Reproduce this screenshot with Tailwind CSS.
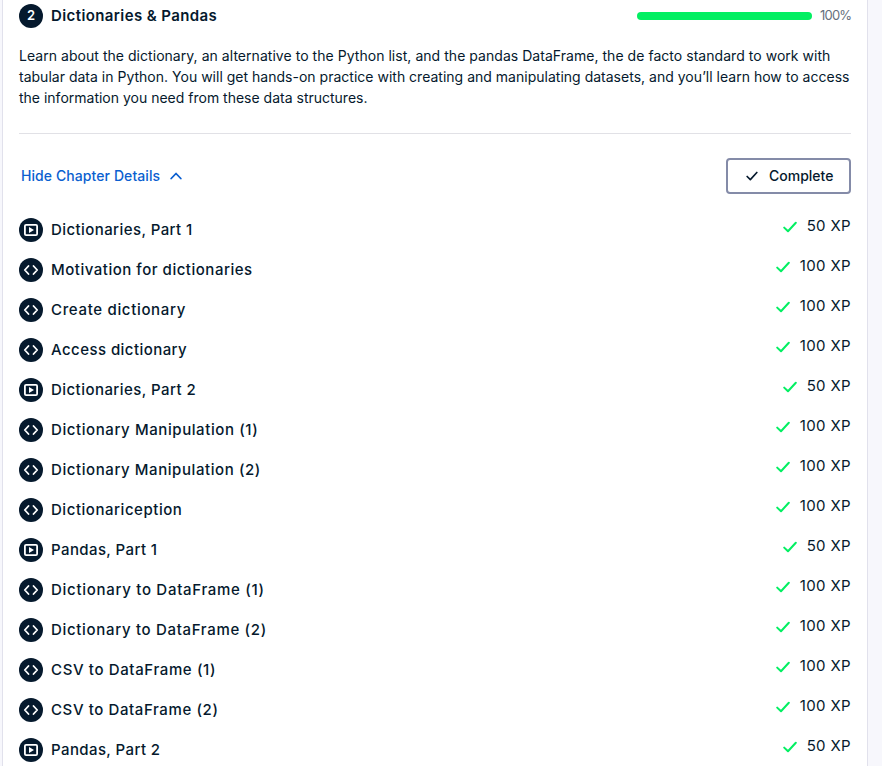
<!DOCTYPE html>
<html lang="en">
<head>
<meta charset="utf-8">
<title>Dictionaries &amp; Pandas</title>
<script src="https://cdn.jsdelivr.net/npm/@tailwindcss/browser@4"></script>
</head>
<body class="h-[766px] overflow-hidden bg-[#f7f7fc] font-['Inter',sans-serif] text-[#05192d]">
<svg class="hidden">
  <symbol id="video" viewBox="0 0 24 24"><circle cx="12" cy="12" r="12" fill="#05192d"/><rect x="5.9" y="6.9" width="12.2" height="10.2" rx="1.2" fill="none" stroke="#fff" stroke-width="1.8"/><path d="M10 9v6l5-3z" fill="#fff"/></symbol>
  <symbol id="code" viewBox="0 0 24 24"><circle cx="12" cy="12" r="12" fill="#05192d"/><path d="M9.5 8 5.8 12l3.7 4M14.5 8l3.7 4-3.7 4" fill="none" stroke="#fff" stroke-width="1.8" stroke-linecap="round" stroke-linejoin="round"/></symbol>
  <symbol id="check" viewBox="0 0 14 12"><path d="M1.2 6.6 5 10.3 12.8 1.8" fill="none" stroke="currentColor" stroke-width="2" stroke-linecap="round" stroke-linejoin="round"/></symbol>
</svg>
<main class="ml-[2px] h-[766px] w-[866px] border-x border-[#e1e1ec] bg-white px-4 pt-1">
  <header class="flex h-6 items-center">
    <span class="flex size-6 items-center justify-center rounded-full bg-[#05192d] text-[13px] font-semibold text-white">2</span>
    <h1 class="ml-2 text-[15px] font-semibold tracking-[0.4px] whitespace-nowrap">Dictionaries &amp; Pandas</h1>
    <div class="ml-auto h-2 w-[175px] rounded-full bg-[#03ef62]"></div>
    <span class="ml-2 w-[31px] text-[13px] tracking-[-0.8px] whitespace-nowrap text-[#65707d]">100%</span>
  </header>
  <div class="mt-[17px] h-[63px] text-[14px] leading-[21px] whitespace-nowrap">
    <p class="tracking-[0.04px]">Learn about the dictionary, an alternative to the Python list, and the pandas DataFrame, the de facto standard to work with</p>
    <p class="tracking-[0.01px]">tabular data in Python. You will get hands-on practice with creating and manipulating datasets, and you’ll learn how to access</p>
    <p>the information you need from these data structures.</p>
  </div>
  <div class="mt-[25px] h-px bg-[#e1e1e6]"></div>
  <div class="mt-6 flex h-9 items-center justify-between">
    <a class="ml-[2px] flex items-center text-[14px] font-medium whitespace-nowrap text-[#0b5fd0]"><span class="pb-[2px] tracking-[0.08px]">Hide Chapter Details</span>
      <svg class="ml-[10px] h-[8px] w-3" viewBox="0 0 12 8"><path d="m1.2 6.5 4.8-5 4.8 5" fill="none" stroke="currentColor" stroke-width="1.8" stroke-linecap="round" stroke-linejoin="round"/></svg></a>
    <button class="flex h-9 w-[125px] items-center rounded border-2 border-[#848ba8] pl-[18px] text-[14px] font-medium"><svg class="mr-[11px] h-[10px] w-3"><use href="#check"/></svg><span class="pb-[2px]">Complete</span></button>
  </div>
  <ul class="mt-4 text-[15px] font-medium whitespace-nowrap">
    <li class="flex h-10 items-center"><svg class="mr-2 size-6"><use href="#video"/></svg><span class="tracking-[0.42px]">Dictionaries, Part 1</span><svg class="mr-[10px] mb-[6px] ml-auto h-3 w-[14px] text-[#03ef62]"><use href="#check"/></svg><b class="mb-2 font-normal tracking-[0.35px]">50 XP</b></li>
    <li class="flex h-10 items-center"><svg class="mr-2 size-6"><use href="#code"/></svg><span class="tracking-[0.52px]">Motivation for dictionaries</span><svg class="mr-[10px] mb-[6px] ml-auto h-3 w-[14px] text-[#03ef62]"><use href="#check"/></svg><b class="mb-2 font-normal tracking-[0.35px]">100 XP</b></li>
    <li class="flex h-10 items-center"><svg class="mr-2 size-6"><use href="#code"/></svg><span class="tracking-[0.67px]">Create dictionary</span><svg class="mr-[10px] mb-[6px] ml-auto h-3 w-[14px] text-[#03ef62]"><use href="#check"/></svg><b class="mb-2 font-normal tracking-[0.35px]">100 XP</b></li>
    <li class="flex h-10 items-center"><svg class="mr-2 size-6"><use href="#code"/></svg><span class="tracking-[0.44px]">Access dictionary</span><svg class="mr-[10px] mb-[6px] ml-auto h-3 w-[14px] text-[#03ef62]"><use href="#check"/></svg><b class="mb-2 font-normal tracking-[0.35px]">100 XP</b></li>
    <li class="flex h-10 items-center"><svg class="mr-2 size-6"><use href="#video"/></svg><span class="tracking-[0.45px]">Dictionaries, Part 2</span><svg class="mr-[10px] mb-[6px] ml-auto h-3 w-[14px] text-[#03ef62]"><use href="#check"/></svg><b class="mb-2 font-normal tracking-[0.35px]">50 XP</b></li>
    <li class="flex h-10 items-center"><svg class="mr-2 size-6"><use href="#code"/></svg><span class="tracking-[0.59px]">Dictionary Manipulation (1)</span><svg class="mr-[10px] mb-[6px] ml-auto h-3 w-[14px] text-[#03ef62]"><use href="#check"/></svg><b class="mb-2 font-normal tracking-[0.35px]">100 XP</b></li>
    <li class="flex h-10 items-center"><svg class="mr-2 size-6"><use href="#code"/></svg><span class="tracking-[0.58px]">Dictionary Manipulation (2)</span><svg class="mr-[10px] mb-[6px] ml-auto h-3 w-[14px] text-[#03ef62]"><use href="#check"/></svg><b class="mb-2 font-normal tracking-[0.35px]">100 XP</b></li>
    <li class="flex h-10 items-center"><svg class="mr-2 size-6"><use href="#code"/></svg><span class="tracking-[0.54px]">Dictionariception</span><svg class="mr-[10px] mb-[6px] ml-auto h-3 w-[14px] text-[#03ef62]"><use href="#check"/></svg><b class="mb-2 font-normal tracking-[0.35px]">100 XP</b></li>
    <li class="flex h-10 items-center"><svg class="mr-2 size-6"><use href="#video"/></svg><span class="tracking-[0.4px]">Pandas, Part 1</span><svg class="mr-[10px] mb-[6px] ml-auto h-3 w-[14px] text-[#03ef62]"><use href="#check"/></svg><b class="mb-2 font-normal tracking-[0.35px]">50 XP</b></li>
    <li class="flex h-10 items-center"><svg class="mr-2 size-6"><use href="#code"/></svg><span class="tracking-[0.71px]">Dictionary to DataFrame (1)</span><svg class="mr-[10px] mb-[6px] ml-auto h-3 w-[14px] text-[#03ef62]"><use href="#check"/></svg><b class="mb-2 font-normal tracking-[0.35px]">100 XP</b></li>
    <li class="flex h-10 items-center"><svg class="mr-2 size-6"><use href="#code"/></svg><span class="tracking-[0.68px]">Dictionary to DataFrame (2)</span><svg class="mr-[10px] mb-[6px] ml-auto h-3 w-[14px] text-[#03ef62]"><use href="#check"/></svg><b class="mb-2 font-normal tracking-[0.35px]">100 XP</b></li>
    <li class="flex h-10 items-center"><svg class="mr-2 size-6"><use href="#code"/></svg><span class="tracking-[0.63px]">CSV to DataFrame (1)</span><svg class="mr-[10px] mb-[6px] ml-auto h-3 w-[14px] text-[#03ef62]"><use href="#check"/></svg><b class="mb-2 font-normal tracking-[0.35px]">100 XP</b></li>
    <li class="flex h-10 items-center"><svg class="mr-2 size-6"><use href="#code"/></svg><span class="tracking-[0.6px]">CSV to DataFrame (2)</span><svg class="mr-[10px] mb-[6px] ml-auto h-3 w-[14px] text-[#03ef62]"><use href="#check"/></svg><b class="mb-2 font-normal tracking-[0.35px]">100 XP</b></li>
    <li class="flex h-10 items-center"><svg class="mr-2 size-6"><use href="#video"/></svg><span class="tracking-[0.4px]">Pandas, Part 2</span><svg class="mr-[10px] mb-[6px] ml-auto h-3 w-[14px] text-[#03ef62]"><use href="#check"/></svg><b class="mb-2 font-normal tracking-[0.35px]">50 XP</b></li>
  </ul>
</main>
</body>
</html>
